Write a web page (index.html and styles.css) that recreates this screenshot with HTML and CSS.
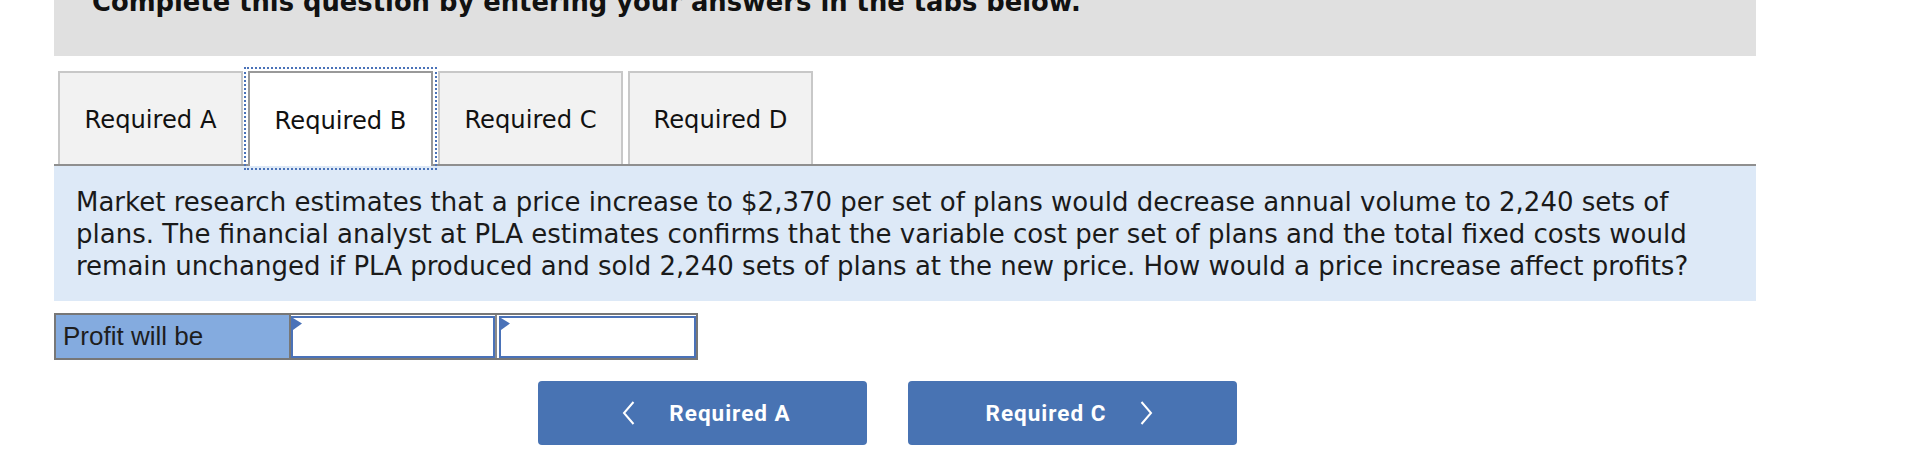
FILE: index.html
```html
<!DOCTYPE html>
<html lang="en">
<head>
<meta charset="utf-8">
<title>Required B</title>
<link rel="stylesheet" href="styles.css">
</head>
<body>
<div class="page">
  <div class="instructions">Complete this question by entering your answers in the tabs below.</div>

  <div class="tabs">
    <div class="tab">Required A</div>
    <div class="tab active">Required B</div>
    <div class="tab">Required C</div>
    <div class="tab">Required D</div>
  </div>

  <div class="panel">
    <p class="question">Market research estimates that a price increase to $2,370 per set of plans would decrease annual volume to 2,240 sets of plans. The financial analyst at PLA estimates confirms that the variable cost per set of plans and the total fixed costs would remain unchanged if PLA produced and sold 2,240 sets of plans at the new price. How would a price increase affect profits?</p>
  </div>

  <div class="answer">
    <div class="answer-label">Profit will be</div>
    <div class="answer-cell"><div class="answer-input"><span class="flag"></span></div></div>
    <div class="answer-cell last"><div class="answer-input"><span class="flag"></span></div></div>
  </div>

  <div class="nav">
    <button class="nav-btn prev">
      <svg class="chev" width="13" height="24" viewBox="0 0 13 24"><path d="M11.5 1 L2 12 L11.5 23" fill="none" stroke="#fff" stroke-width="2"/></svg>
      <span>Required A</span>
    </button>
    <button class="nav-btn next">
      <span>Required C</span>
      <svg class="chev" width="13" height="24" viewBox="0 0 13 24"><path d="M1.5 1 L11 12 L1.5 23" fill="none" stroke="#fff" stroke-width="2"/></svg>
    </button>
  </div>
</div>
</body>
</html>
```

FILE: styles.css
```css
html, body {
  margin: 0;
  padding: 0;
  background: #ffffff;
}

body {
  overflow: hidden;
  font-family: "DejaVu Sans", Verdana, sans-serif;
  color: #1a1a1a;
}

.page {
  margin-left: 54px;
  width: 1702px;
}

.instructions {
  margin-top: -13px;
  height: 69px;
  box-sizing: border-box;
  background: #e0e0e0;
  padding-left: 38px;
  font-weight: bold;
  font-size: 25.8px;
  line-height: 30px;
  color: #111;
  white-space: nowrap;
}

.tabs {
  display: flex;
  gap: 5px;
  padding-left: 4px;
  margin-top: 15px;
  height: 93px;
  align-items: flex-start;
}

.tab {
  box-sizing: border-box;
  width: 185px;
  height: 93px;
  background: #f2f2f2;
  border: 2px solid #c8c8c8;
  border-bottom: none;
  display: flex;
  align-items: center;
  justify-content: center;
  padding-top: 2px;
  font-size: 24.2px;
  color: #111;
}

.tab.active {
  position: relative;
  z-index: 1;
  height: 95px;
  background: #ffffff;
  border-color: #999999;
  outline: 2px dotted #4a72b8;
  outline-offset: 2px;
}

.panel {
  background: #dde9f7;
  border-top: 2px solid #8f8f8f;
  padding: 20px 22px 19px 22px;
}

.question {
  margin: 0;
  font-size: 26px;
  line-height: 32px;
  color: #1a1a1a;
}

.answer {
  display: flex;
  width: fit-content;
  margin-top: 12px;
  border: 2px solid #777777;
  height: 43px;
}

.answer-label {
  width: 226px;
  padding-left: 7px;
  background: #84abdf;
  border-right: 2px solid #777777;
  font-family: "Liberation Sans", Arial, sans-serif;
  font-size: 26px;
  line-height: 43px;
  color: #1e1e1e;
}

.answer-cell {
  box-sizing: border-box;
  width: 206px;
  border-right: 2px solid #8a8a8a;
  padding-top: 1px;
}

.answer-cell.last {
  width: 199px;
  border-right: none;
  padding-left: 2px;
}

.answer-input {
  position: relative;
  box-sizing: border-box;
  height: 42px;
  background: #ffffff;
  border: 2px solid #4a72b8;
}

.flag {
  position: absolute;
  left: 0;
  top: 0;
  width: 9px;
  height: 12px;
  background: #4a72b8;
  clip-path: polygon(0 0, 100% 45%, 0 100%);
}

.nav {
  display: flex;
  gap: 41px;
  margin-top: 21px;
  padding-left: 484px;
}

.nav-btn {
  box-sizing: border-box;
  width: 329px;
  height: 64px;
  border: none;
  border-radius: 4px;
  background: #4873b3;
  color: #ffffff;
  display: flex;
  align-items: center;
  justify-content: center;
  gap: 34px;
  font-family: Roboto, "Liberation Sans", sans-serif;
  font-weight: bold;
  font-size: 22.5px;
  letter-spacing: 1px;
  padding: 0;
}

.nav-btn.prev {
  padding-left: 8px;
}

.nav-btn.next {
  padding-right: 6px;
}

.chev {
  display: block;
}
```
